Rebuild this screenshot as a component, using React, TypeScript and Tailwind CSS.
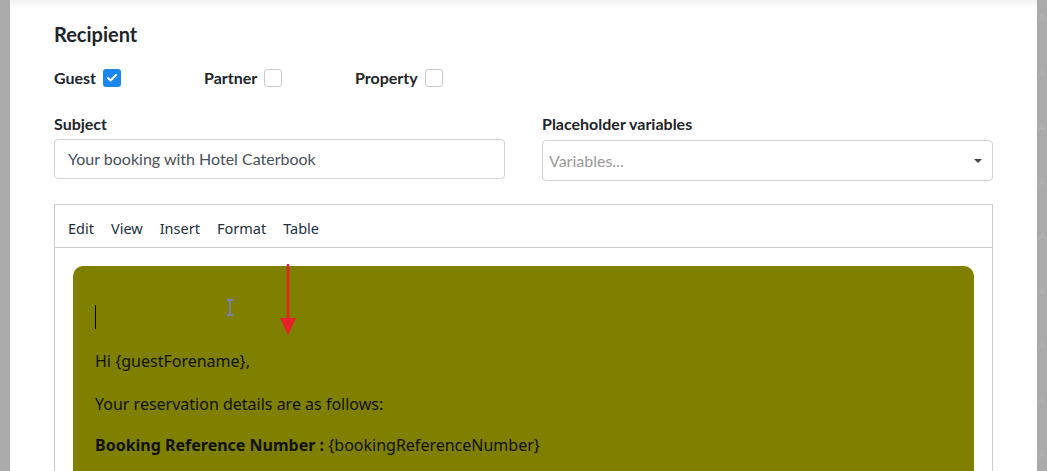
import { Check } from "lucide-react";

function Box({ checked, label }: { checked?: boolean; label: string }) {
  return (
    <label className="flex items-center gap-[7px] text-[16px] font-bold text-[#212529]">
      {label}
      {checked ? (
        <span className="flex h-[18px] w-[18px] items-center justify-center rounded-[3px] bg-[#1a86f0]">
          <Check className="h-3 w-3 text-white" strokeWidth={4} />
        </span>
      ) : (
        <span className="h-[18px] w-[18px] rounded-[3px] border border-[#c6cbd3] bg-white" />
      )}
    </label>
  );
}

export default function App() {
  const marks = Array.from({ length: 9 });
  return (
    <div className="flex h-[471px] w-[1047px] overflow-hidden bg-[#aaaaaa] font-['Lato',sans-serif]">
      <div className="w-[10px] shrink-0 bg-[#aaaaaa]" />

      <div className="flex w-[1027px] shrink-0 flex-col bg-white px-[44px] shadow-[inset_0_8px_6px_-4px_rgba(0,0,0,0.06)]">
        <h2 className="mt-[22px] h-[24px] text-[20px] leading-[24px] font-bold text-[#212529]">
          Recipient
        </h2>

        <div className="mt-[21px] flex h-[22px] items-center">
          <div className="w-[150px]">
            <Box checked label="Guest" />
          </div>
          <div className="w-[151px]">
            <Box label="Partner" />
          </div>
          <Box label="Property" />
        </div>

        <div className="mt-[25px] grid grid-cols-2 gap-[37px]">
          <div>
            <p className="h-[20px] text-[16px] leading-[20px] font-bold text-[#212529]">Subject</p>
            <div className="mt-[5px] flex h-[40px] items-center rounded-[4px] border border-[#ced4da] px-[13px] text-[16px] text-[#495057]">
              Your booking with Hotel Caterbook
            </div>
          </div>
          <div>
            <p className="h-[20px] text-[16px] leading-[20px] font-bold text-[#212529]">
              Placeholder variables
            </p>
            <div className="mt-[6px] flex h-[41px] items-center justify-between rounded-[4px] border border-[#ced4da] pr-[10px] pl-[6px] text-[16px] text-[#9a9a9a]">
              <span>Variables...</span>
              <span className="h-0 w-0 border-x-[4px] border-t-[4px] border-x-transparent border-t-[#444]" />
            </div>
          </div>
        </div>

        <div className="mt-[23px] flex flex-1 flex-col border border-b-0 border-[#cccccc]">
          <div className="flex h-[43px] shrink-0 items-center gap-[17px] border-b border-[#cccccc] px-[13px] pt-[5px] font-['Noto_Sans',sans-serif] text-[14.5px] text-[#222f3e]">
            <span>Edit</span>
            <span>View</span>
            <span>Insert</span>
            <span>Format</span>
            <span>Table</span>
          </div>

          <div className="flex-1 px-[18px] pt-[18px]">
            <div className="relative h-full rounded-t-[10px] bg-[#808000] px-[22px] pt-[39px] font-['Noto_Sans',sans-serif] text-[16px] text-[#111]">
              <div className="h-[24px] w-px bg-black" />
              <p className="mt-[21px] leading-[22px]">Hi {"{guestForename}"},</p>
              <p className="mt-[21px] leading-[22px]">Your reservation details are as follows:</p>
              <p className="mt-[19px] leading-[22px]">
                <b>Booking Reference Number :</b> {"{bookingReferenceNumber}"}
              </p>

              <svg className="absolute top-[33px] left-[152px]" width="10" height="18" viewBox="0 0 10 18">
                <path d="M2 1h6M5 1v15M2 16h6" stroke="#7b7bff" strokeWidth="1.3" fill="none" />
              </svg>
              <svg className="absolute top-[-2px] left-[205px]" width="20" height="74" viewBox="0 0 20 74">
                <path d="M10 0v58" stroke="#e8202a" strokeWidth="2.5" />
                <path d="M2 54h16l-8 17z" fill="#e8202a" />
              </svg>
            </div>
          </div>
        </div>
      </div>

      <div className="flex h-[471px] w-[10px] shrink-0 flex-col items-center gap-[38px] overflow-hidden pt-[10px] text-[11px] text-[#b3b3b3]">
        {marks.map((_, i) => (
          <span key={i}>A</span>
        ))}
      </div>
    </div>
  );
}
